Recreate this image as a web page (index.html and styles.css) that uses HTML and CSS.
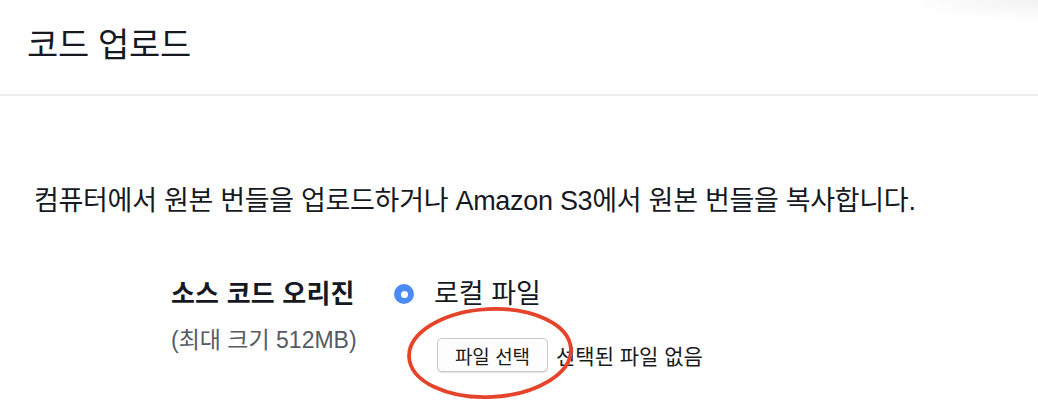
FILE: index.html
```html
<!DOCTYPE html>
<html lang="ko">
<head>
<meta charset="utf-8">
<link rel="stylesheet" href="styles.css">
</head>
<body>
<div class="page">
  <div class="corner-shadow"></div>
  <header class="header">
    <h1 class="title">코드 업로드</h1>
  </header>
  <main class="content">
    <p class="desc">컴퓨터에서 원본 번들을 업로드하거나 Amazon S3에서 원본 번들을 복사합니다.</p>
    <div class="field">
      <div class="label-col">
        <div class="label">소스 코드 오리진</div>
        <div class="hint">(최대 크기 512MB)</div>
      </div>
      <div class="value-col">
        <label class="radio-row">
          <span class="radio"><span class="dot"></span></span>
          <span class="radio-text">로컬 파일</span>
        </label>
        <div class="file-row">
          <span class="file-btn">파일 선택</span>
          <span class="file-status">선택된 파일 없음</span>
          <svg class="annot" width="180" height="100" viewBox="0 0 180 100">
            <ellipse cx="87" cy="47" rx="81" ry="44" fill="none" stroke="#e5432a" stroke-width="3.8" transform="rotate(-3 87 47)"/>
          </svg>
        </div>
      </div>
    </div>
  </main>
</div>
</body>
</html>
```
FILE: styles.css
```css
html, body {
  margin: 0;
  padding: 0;
  background: #ffffff;
}
body {
  font-family: "Liberation Sans", "Noto Sans CJK KR", sans-serif;
  color: #16191f;
  width: 1038px;
  height: 414px;
  overflow: hidden;
}
.page {
  position: relative;
  height: 414px;
}
.corner-shadow {
  position: absolute;
  top: 0;
  right: 0;
  width: 140px;
  height: 22px;
  background: radial-gradient(ellipse 140px 22px at 100% 0%, rgba(0,0,0,0.05), rgba(0,0,0,0) 100%);
}
.header {
  height: 94px;
  border-bottom: 2px solid #ececec;
  padding-left: 27px;
  display: flex;
  align-items: flex-start;
}
.title {
  margin: 23px 0 0 0;
  font-size: 34px;
  font-weight: 400;
  line-height: 44px;
  letter-spacing: -0.3px;
}
.content {
  padding: 0 0 0 34px;
}
.desc {
  margin: 88px 0 0 0;
  font-size: 27px;
  line-height: 34px;
  letter-spacing: -0.3px;
}
.field {
  display: flex;
  margin: 59px 0 0 137px;
}
.label-col {
  width: 222px;
}
.label {
  font-size: 26px;
  font-weight: 700;
  line-height: 34px;
  letter-spacing: 0.2px;
}
.hint {
  margin-top: 15px;
  font-size: 23px;
  line-height: 28px;
  color: #545b64;
}
.value-col {
  display: flex;
  flex-direction: column;
}
.radio-row {
  display: flex;
  align-items: center;
  gap: 20px;
  height: 34px;
  margin-left: 1px;
}
.radio {
  width: 20px;
  height: 20px;
  border-radius: 50%;
  background: #4c8bf5;
  display: flex;
  align-items: center;
  justify-content: center;
}
.dot {
  width: 7px;
  height: 7px;
  border-radius: 50%;
  background: #fff;
}
.radio-text {
  font-size: 27px;
  line-height: 34px;
}
.file-row {
  position: relative;
  display: flex;
  align-items: center;
  gap: 8px;
  margin: 27px 0 0 44px;
}
.file-btn {
  display: inline-flex;
  align-items: center;
  justify-content: center;
  width: 109px;
  height: 32px;
  border: 1px solid #c9c9c9;
  border-radius: 5px;
  background: #fdfdfd;
  box-shadow: 0 1px 1px rgba(0,0,0,0.12);
  font-size: 19px;
  color: #1a1a1a;
}
.file-status {
  font-size: 21px;
  color: #1a1a1a;
}
.annot {
  position: absolute;
  left: -34px;
  top: -32px;
}
```
